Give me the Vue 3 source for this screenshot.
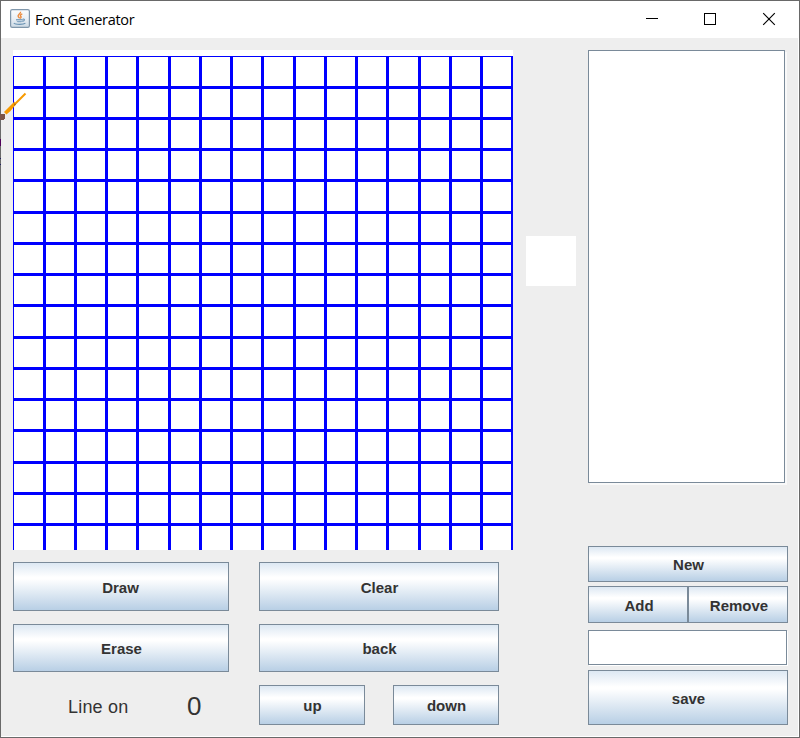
<script setup>
const steps = Array.from({ length: 15 }, (_, i) => Math.ceil(31.25 * (i + 1)) - 1)
</script>

<template>
  <div class="window">
    <header class="titlebar">
      <svg class="java" width="20" height="19" viewBox="0 0 20 19">
        <defs>
          <linearGradient id="tile" x1="0" y1="0" x2="0" y2="1">
            <stop offset="0" stop-color="#fafcfd" />
            <stop offset=".5" stop-color="#eaf0f5" />
            <stop offset="1" stop-color="#ccd9e4" />
          </linearGradient>
        </defs>
        <rect x=".6" y=".6" width="18.800" height="17.800" rx="1.600" fill="url(#tile)" stroke="#8097ab" stroke-width="1.200" />
        <path d="M10.500 2.800c.6 2-3.300 2.700-2.300 4.700.4.800 1.200 1.100 1.100 1.900M12.300 4.900c-2.300.9-2.300 1.700-1.400 2.600.5.600 0 1.400-.8 1.800" fill="none" stroke="#ec8a3c" stroke-width="1.400" />
        <path d="M6 10h6.800c-.2 1.700-1 2.700-1.500 3.200H7.600C6.600 12.300 6.100 11.300 6 10z" fill="#7fa3bf" />
        <path d="M6.500 11.600h5.600" stroke="#dce7ef" stroke-width=".7" />
        <path d="M12.800 10.100c2.300-.4 2.200 1.900-.5 2.300M3.800 14.200c1.500 1.500 9.800 1.500 11.600 0" fill="none" stroke="#6a93b3" stroke-width="1.100" />
      </svg>
      <span class="title">Font Generator</span>
      <svg class="controls" width="131" height="14" viewBox="0 0 131 14" fill="none" stroke="#000">
        <path d="M0 6.500h12" shape-rendering="crispEdges" />
        <rect x="58.500" y="1.500" width="11" height="11" shape-rendering="crispEdges" />
        <path d="M117.200 1.200l11.600 11.600M128.800 1.200l-11.600 11.600" stroke-width="1.150" />
      </svg>
    </header>

    <main class="content">
      <section class="editor">
        <svg class="grid" width="500" height="500" viewBox="0 0 500 500" shape-rendering="crispEdges">
          <rect width="500" height="500" fill="#fff" />
          <g fill="#00f">
            <rect y="6" width="1" height="494" />
            <rect y="6" width="500" height="1" />
            <rect x="498" y="6" width="2" height="494" />
            <rect v-for="s in steps" :key="'v' + s" :x="s - 1" y="6" width="3" height="494" />
            <rect v-for="s in steps" :key="'h' + s" x="0" :y="s + 5" width="500" height="3" />
          </g>
        </svg>
        <div class="actions">
          <button class="low draw">Draw</button>
          <button class="low">Clear</button>
          <button>Erase</button>
          <button>back</button>
          <div class="line"><span>Line on</span><span class="count">0</span></div>
          <div class="pair"><button>up</button><button>down</button></div>
        </div>
      </section>
      <div class="preview"></div>
      <aside class="side">
        <div class="list"></div>
        <button class="new">New</button>
        <div class="split"><button class="low">Add</button><button class="low">Remove</button></div>
        <input class="name" type="text" aria-label="Name" />
        <button class="save low">save</button>
      </aside>
    </main>

    <svg class="brush" width="28" height="75" viewBox="0 0 28 75">
      <path d="M25.500 2.500L14 14" stroke="#f79a00" stroke-width="2" />
      <path d="M14.500 10.500L4 21l2.400 2.400L10 20.500l5.500-6.500z" fill="#f79a00" />
      <path d="M14 12.500l2 .5-1.500 2z" fill="#a0621c" />
      <path d="M0 23h4l1 1v3l-2 2H0z" fill="#7c5548" shape-rendering="crispEdges" />
      <path d="M0 48h1v7H0z" fill="#50005a" />
      <path d="M0 67h1v1H0zM0 73h1v1H0z" fill="#202060" />
    </svg>
  </div>
</template>

<style>
body { margin: 0; overflow: hidden; }
</style>

<style scoped>
* { box-sizing: border-box; }
.window {
  position: relative;
  width: 800px;
  height: 738px;
  border: 1px solid #696969;
  background: #eee;
  box-shadow: inset -1px -1px #fff;
  font-family: "Liberation Sans", Arial, sans-serif;
  color: #333;
}
.titlebar {
  display: flex;
  align-items: center;
  height: 37px;
  padding: 0 22px 0 9px;
  background: #fff;
}
.java { margin-top: -2px; }
.title {
  margin-left: 5px;
  font: 14.500px "Open Sans", sans-serif;
  letter-spacing: -.3px;
  color: #000;
  white-space: nowrap;
}
.controls { margin-left: auto; margin-top: -1px; }
.content { display: flex; padding: 12px 11px 0 12px; }
.editor { width: 500px; }
.grid { display: block; }
.actions {
  display: grid;
  grid-template-columns: 216px 240px;
  grid-template-rows: 49px 48px 40px;
  column-gap: 30px;
  row-gap: 13px;
  padding-top: 12px;
}
button {
  display: block;
  margin: 0;
  padding: 0 0 0 1px;
  border: 1px solid #7a8a99;
  border-radius: 0;
  background: linear-gradient(#dde8f3 0%, #fff 30%, #fff 34%, #b8cfe5 100%);
  font: bold 15px "Liberation Sans", Arial, sans-serif;
  color: #333;
}
button.low { padding-top: 2px; }
button.draw { padding-left: 0; padding-right: 1px; }
.split button { padding-left: 2px; }
.pair { display: grid; grid-template-columns: 106px 106px; gap: 28px; }
.line { display: flex; align-items: center; padding-left: 55px; font-size: 18px; letter-spacing: .2px; }
.line span { width: 119px; padding-top: 4px; }
.line .count { width: auto; padding-top: 2px; font-size: 26px; letter-spacing: 0; }
.preview { width: 50px; height: 50px; margin: 186px 12px 0 13px; background: #fff; }
.side { display: flex; flex-direction: column; width: 200px; }
.list {
  width: 197px;
  height: 433px;
  border: 1px solid #7a8a99;
  background: #fff;
  box-shadow: 2px 2px #f9f9f9;
}
.new { height: 36px; margin-top: 63px; }
.split { display: grid; grid-template-columns: 1fr 1fr; height: 37px; margin-top: 4px; }
.name {
  width: 199px;
  height: 35px;
  margin: 7px 0 0;
  padding: 0 6px;
  border: 1px solid #7a8a99;
  border-radius: 0;
  background: #fff;
  box-shadow: 1px 1px #fff;
  font: 15px "Liberation Sans", Arial, sans-serif;
}
.save { height: 55px; margin-top: 5px; }
.brush { position: absolute; left: -1px; top: 90px; }
</style>
